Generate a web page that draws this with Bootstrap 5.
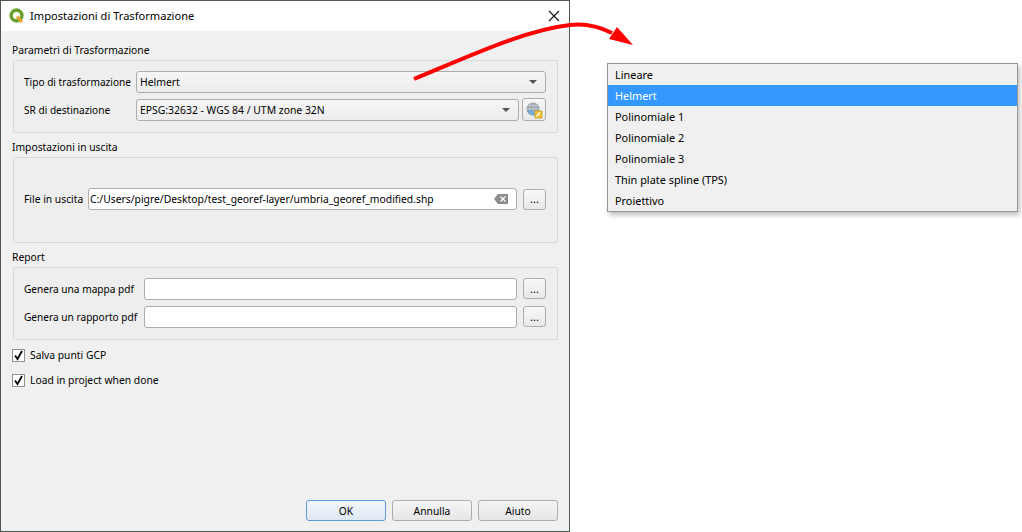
<!DOCTYPE html>
<html lang="it">
<head>
<meta charset="utf-8">
<title>Impostazioni di Trasformazione</title>
<link href="https://cdn.jsdelivr.net/npm/bootstrap@5.3.0/dist/css/bootstrap.min.css" rel="stylesheet">
<style>
html,body{height:532px;overflow:hidden;background:#fff}
body{font-family:"Noto Sans","DejaVu Sans",sans-serif;font-size:10.3px;line-height:14px;color:#000;position:relative}
.dlg{width:570px;height:532px;background:#f0f0f0;border:1px solid #4c5a4c;flex:none}
.dlg-title{height:30px;background:#fff;padding-left:8px;gap:6px;font-size:11.1px}
.dlg-close{margin-left:auto;margin-right:9px;display:block}
.dlg-body{padding:0 11px 10px 11px}
.grp-label{height:14px;margin-bottom:3px}
.grp-frame{background:#eeeeee;border:1px solid #d9d9d9;border-radius:2px;margin-left:1px;padding:0 11px 0 10px;display:flex;flex-direction:column;justify-content:center;gap:6px}
.frm1{height:73px;margin-bottom:7px;padding-bottom:2px}
.frm2{height:86px;margin-bottom:7px;padding-bottom:2px}
.frm3{height:73px;margin-bottom:8px;padding-bottom:2px}
.frow{height:22px;gap:6px;white-space:nowrap}
.frow>label{flex:none;margin:0}
.lb1{width:106px;font-size:10.1px}.lb2{width:58px}.lb3{width:114px;font-size:10.15px}
.qcombo,.qinput{height:22px;background:#fff;border:1px solid #adadad;border-radius:3px;padding:0 4px 0 3px;flex:1 1 0;min-width:0;white-space:nowrap}
.qinput{padding-left:1px;font-size:10.35px}
.qcombo{background:linear-gradient(#f6f6f6,#ececec);font-size:10.4px}
.caret-dn{margin-left:auto;margin-right:4px;width:0;height:0;border-left:4px solid transparent;border-right:4px solid transparent;border-top:4px solid #555}
.qtool{height:21px;width:23px;flex:none;border:1px solid #adadad;border-radius:3px;background:linear-gradient(#f8f8f8,#e8e8e8);padding:0;line-height:14px;font-size:11px;color:#000}
.qglobe{height:23px;width:24px;margin-left:-3px;padding:0}
.qcheck{height:14px;gap:5px;margin-bottom:11px}
.qbox{width:13px;height:13px;background:#fff;border:1px solid #8f8f8f;flex:none}
.dlg-foot{margin-top:auto;gap:6px;padding-right:0}
.qbtn{width:80px;height:21px;padding:0;border:1px solid #adadad;border-radius:3px;background:linear-gradient(#f5f5f5,#e6e6e6);font-size:10.3px;line-height:14px;color:#000}
.qbtn-def{border-color:#5c9bd8;background:linear-gradient(#f1f6fb,#dfe8f2)}
.qpopup{position:absolute;left:607px;top:63px;width:411px;height:149px;background:#f0f0f0;border:1px solid #979797;box-shadow:2px 3px 5px rgba(0,0,0,.25);padding:0 0 2px;z-index:2;font-size:10.9px}
.qitem{height:21px;line-height:22px;padding-left:7px}
.qitem-on{background:#3399ff;color:#fff}
.qarrow{position:absolute;left:0;top:0;width:1022px;height:532px;pointer-events:none;z-index:3}
</style>
</head>
<body>
<div class="dlg d-flex flex-column">
  <div class="dlg-title d-flex align-items-center">
    <svg width="15" height="16" viewBox="0 0 15 16"><circle cx="7.5" cy="7.5" r="5.4" fill="none" stroke="#6c9f32" stroke-width="3.6"/><path d="M8 8.5l5 5.5" stroke="#e5a627" stroke-width="3"/></svg>
    <span>Impostazioni di Trasformazione</span>
    <svg class="dlg-close" width="12" height="12" viewBox="0 0 12 12"><path d="M1 1l10 10M11 1L1 11" stroke="#111" stroke-width="1.1" fill="none"/></svg>
  </div>
  <div class="dlg-body d-flex flex-column flex-grow-1">
    <div class="grp-label" style="margin-top:12px">Parametri di Trasformazione</div>
    <div class="grp-frame frm1">
      <div class="frow d-flex align-items-center"><label class="lb1">Tipo di trasformazione</label><div class="qcombo d-flex align-items-center"><span>Helmert</span><i class="caret-dn"></i></div></div>
      <div class="frow d-flex align-items-center"><label class="lb1">SR di destinazione</label><div class="qcombo d-flex align-items-center"><span>EPSG:32632 - WGS 84 / UTM zone 32N</span><i class="caret-dn"></i></div>
        <button class="qtool qglobe d-flex align-items-center justify-content-center" type="button" aria-label="CRS"><svg width="18" height="18" viewBox="0 0 18 18"><circle cx="8" cy="8" r="6.5" fill="#9aa0a8"/><path d="M2 8h12M8 2v12M3.5 4.5h9M3.5 11.5h9M5 2.5v11M11 2.5v11" stroke="#d8dde2" stroke-width=".7"/><path d="M2 9a6.5 6.5 0 0 0 8 5.3L8 9z" fill="#6aa6dc" opacity=".8"/><rect x="10" y="10" width="7" height="7" fill="#f0c030" stroke="#b98c10" stroke-width=".6"/><path d="M11.5 15.5l3.5-4" stroke="#fff" stroke-width="1.2"/></svg></button>
      </div>
    </div>
    <div class="grp-label">Impostazioni in uscita</div>
    <div class="grp-frame frm2">
      <div class="frow d-flex align-items-center"><label class="lb2">File in uscita</label><div class="qinput d-flex align-items-center"><span>C:/Users/pigre/Desktop/test_georef-layer/umbria_georef_modified.shp</span>
        <svg class="ms-auto me-1" width="14" height="10" viewBox="0 0 14 10"><path d="M4 0h10v10H4L0 5z" fill="#8c8c8c"/><path d="M6.5 2.5l5 5M11.5 2.5l-5 5" stroke="#fff" stroke-width="1.2"/></svg></div>
        <button class="qtool" type="button">...</button></div>
    </div>
    <div class="grp-label">Report</div>
    <div class="grp-frame frm3">
      <div class="frow d-flex align-items-center"><label class="lb3">Genera una mappa pdf</label><div class="qinput"></div><button class="qtool" type="button">...</button></div>
      <div class="frow d-flex align-items-center"><label class="lb3">Genera un rapporto pdf</label><div class="qinput"></div><button class="qtool" type="button">...</button></div>
    </div>
    <div class="qcheck d-flex align-items-center"><span class="qbox d-flex align-items-center justify-content-center"><svg width="11" height="11" viewBox="0 0 11 11"><path d="M2 5.5l2.5 3.5L9 1" stroke="#000" stroke-width="1.8" fill="none"/></svg></span><span>Salva punti GCP</span></div>
    <div class="qcheck d-flex align-items-center"><span class="qbox d-flex align-items-center justify-content-center"><svg width="11" height="11" viewBox="0 0 11 11"><path d="M2 5.5l2.5 3.5L9 1" stroke="#000" stroke-width="1.8" fill="none"/></svg></span><span>Load in project when done</span></div>
    <div class="dlg-foot d-flex justify-content-end">
      <button class="qbtn qbtn-def" type="button">OK</button>
      <button class="qbtn" type="button">Annulla</button>
      <button class="qbtn" type="button">Aiuto</button>
    </div>
  </div>
</div>
<div class="qpopup">
  <div class="qitem">Lineare</div>
  <div class="qitem qitem-on">Helmert</div>
  <div class="qitem">Polinomiale 1</div>
  <div class="qitem">Polinomiale 2</div>
  <div class="qitem">Polinomiale 3</div>
  <div class="qitem">Thin plate spline (TPS)</div>
  <div class="qitem">Proiettivo</div>
</div>
<svg class="qarrow" viewBox="0 0 1022 532"><path d="M414 79C470 56 525 30 570 25C587 23 600 27 612 33" fill="none" stroke="#ff0000" stroke-width="4"/><path d="M617 27L633 45L609 39Z" fill="#ff0000"/></svg>
</body>
</html>
